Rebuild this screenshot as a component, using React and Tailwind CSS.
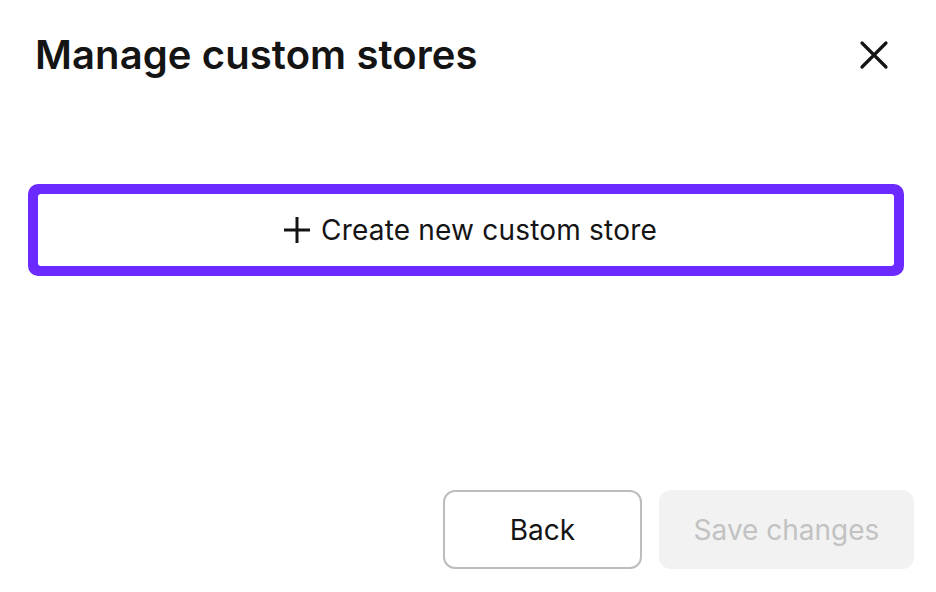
import React from 'react';

const CloseIcon = () => (
  <svg width="30" height="30" viewBox="0 0 30 30" fill="none" stroke="#141414" strokeWidth="3.2" strokeLinecap="round">
    <path d="M3 3 L27 27 M27 3 L3 27" />
  </svg>
);

const PlusIcon = () => (
  <svg width="28" height="28" viewBox="0 0 28 28" fill="none" stroke="#141414" strokeWidth="3">
    <path d="M14 1 V27 M1 14 H27" />
  </svg>
);

const App = () => {
  return (
    <div className="w-[936px] h-[592px] bg-white flex flex-col font-['Inter',sans-serif] text-[#141414]">
      {/* Header */}
      <div className="flex items-center justify-between pl-[35px] pr-[47px] pt-[31px]">
        <h2 className="text-[40px] leading-[48px] font-semibold tracking-[0.1px]">Manage custom stores</h2>
        <button className="flex items-center justify-center">
          <CloseIcon />
        </button>
      </div>

      {/* Create button with focus ring */}
      <div className="mt-[105px] ml-[28px] mr-[32px] p-[10px] rounded-[10px] bg-[#6b2aff]">
        <button className="w-full h-[72px] bg-white rounded-[3px] flex items-center justify-center gap-[10px] pl-[8px]">
          <PlusIcon />
          <span className="text-[28px] leading-[34px] tracking-[0.2px]">Create new custom store</span>
        </button>
      </div>

      {/* Footer */}
      <div className="mt-auto flex justify-end gap-[17px] pr-[22px] pb-[23px]">
        <button className="w-[199px] h-[79px] rounded-[12px] border-2 border-[#bdbdbd] bg-white text-[28px] text-[#141414]">
          Back
        </button>
        <button disabled className="w-[255px] h-[79px] rounded-[12px] bg-[#f2f2f2] text-[28px] text-[#c2c2c2]">
          Save changes
        </button>
      </div>
    </div>
  );
};

export default App;
